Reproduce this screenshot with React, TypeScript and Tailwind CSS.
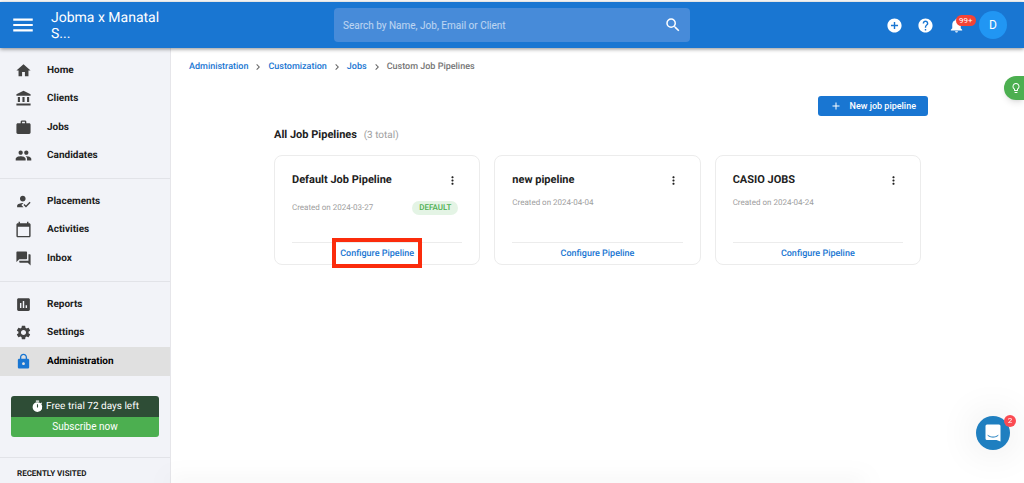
import {
  MdAccountBalance,
  MdAdd,
  MdAddCircle,
  MdAssessment,
  MdCalendarToday,
  MdChevronRight,
  MdForum,
  MdHelp,
  MdHome,
  MdHowToReg,
  MdLightbulbOutline,
  MdLock,
  MdMenu,
  MdMoreVert,
  MdNotifications,
  MdPeople,
  MdSearch,
  MdSettings,
  MdTimer,
  MdWork,
} from 'react-icons/md';
import type { IconType } from 'react-icons';

type NavEntry = { label: string; icon: IconType; active?: boolean };
type Pipeline = { name: string; created: string; isDefault?: boolean; highlighted?: boolean };

const mainNav: NavEntry[] = [
  { label: 'Home', icon: MdHome },
  { label: 'Clients', icon: MdAccountBalance },
  { label: 'Jobs', icon: MdWork },
  { label: 'Candidates', icon: MdPeople },
];

const activityNav: NavEntry[] = [
  { label: 'Placements', icon: MdHowToReg },
  { label: 'Activities', icon: MdCalendarToday },
  { label: 'Inbox', icon: MdForum },
];

const adminNav: NavEntry[] = [
  { label: 'Reports', icon: MdAssessment },
  { label: 'Settings', icon: MdSettings },
  { label: 'Administration', icon: MdLock, active: true },
];

const pipelines: Pipeline[] = [
  { name: 'Default Job Pipeline', created: '2024-03-27', isDefault: true, highlighted: true },
  { name: 'new pipeline', created: '2024-04-04' },
  { name: 'CASIO JOBS', created: '2024-04-24' },
];

const crumbs = ['Administration', 'Customization', 'Jobs'];

const NavGroup = ({ items, className }: { items: NavEntry[]; className: string }) => (
  <ul className={`grid auto-rows-fr ${className}`}>
    {items.map(({ label, icon: Icon, active }) => (
      <li key={label} className="flex">
        <a
          href="#"
          className={`flex grow items-center gap-[15px] pl-[15px] text-[10px] leading-[17px] font-bold ${active ? 'bg-[#e0e0e0] text-black' : 'text-[#212121]'}`}
        >
          <Icon size={17} className={active ? 'text-[#1976d2]' : 'text-[#424242]'} />
          {label}
        </a>
      </li>
    ))}
  </ul>
);

const Header = () => (
  <header className="relative z-10 mt-0.5 grid h-[46px] grid-cols-[1fr_minmax(0,356px)_1fr] items-center bg-[#1976d2] text-white shadow-[0_1px_4px_rgba(0,0,0,0.45)]">
    <div className="flex items-center">
      <button aria-label="Menu" className="ml-2.5">
        <MdMenu size={26} />
      </button>
      <div className="ml-[15px] w-[120px] pt-0.5 text-sm leading-4">Jobma x Manatal S...</div>
    </div>
    <form className="flex h-[34px] items-center rounded-sm bg-[#478bd9] pr-2">
      <input
        type="text"
        aria-label="Search"
        placeholder="Search by Name, Job, Email or Client"
        className="min-w-0 grow bg-transparent px-[9px] text-[10px] leading-[17px] outline-none placeholder:text-white/65"
      />
      <button type="button" aria-label="Search">
        <MdSearch size={18} />
      </button>
    </form>
    <div className="mr-[17px] flex items-center justify-end gap-3.5">
      <button aria-label="Add">
        <MdAddCircle size={17} />
      </button>
      <button aria-label="Help">
        <MdHelp size={17} />
      </button>
      <button aria-label="Notifications" className="relative">
        <MdNotifications size={17} />
        <span className="absolute -top-0.5 left-2 rounded-full bg-[#f44336] px-[3px] text-[8px] leading-[11px]">99+</span>
      </button>
      <button className="size-7 rounded-full bg-[#2196f3] text-xs">D</button>
    </div>
  </header>
);

const Sidebar = () => (
  <aside className="flex w-[171px] shrink-0 flex-col border-r border-[#e6e6ea] bg-[#f2f3f8] pt-2">
    <nav>
      <NavGroup items={mainNav} className="h-[114px]" />
      <hr className="my-2 border-[#e2e3e8]" />
      <NavGroup items={activityNav} className="h-[86px]" />
      <hr className="my-2 border-[#e2e3e8]" />
      <NavGroup items={adminNav} className="h-[86px]" />
    </nav>
    <div className="mx-[11px] mt-5 overflow-hidden rounded-[3px] text-center text-[10px] leading-5 text-white">
      <div className="flex h-[21px] items-center justify-center gap-0.5 bg-[#2e4d36]">
        <MdTimer size={13} />
        Free trial 72 days left
      </div>
      <button className="block w-full bg-[#4caf50]">Subscribe now</button>
    </div>
    <h2 className="mt-5 border-t border-[#e2e3e8] px-[17px] py-2.5 text-[8px] leading-3 font-bold text-[#212121]">
      RECENTLY VISITED
    </h2>
  </aside>
);

const PipelineCard = ({ name, created, isDefault, highlighted }: Pipeline) => (
  <article className="flex h-[110px] flex-col rounded-lg border border-[#ececec] px-[17px]">
    <div className="mt-4 flex items-center justify-between">
      <h3 className="text-[11px] leading-4 font-bold text-[#212121]">{name}</h3>
      <button aria-label={`${name} options`} className="mr-[3px]">
        <MdMoreVert size={13} className="text-[#212121]" />
      </button>
    </div>
    <div className={`flex items-center justify-between text-[8px] leading-[14px] text-[#9e9e9e] ${isDefault ? 'mt-[13px]' : 'mt-2'}`}>
      <span>Created on {created}</span>
      {isDefault && (
        <span className="mr-1 rounded-full bg-[#e4f4e5] px-[7px] font-medium text-[#4caf50]">DEFAULT</span>
      )}
    </div>
    <div className="relative mt-auto flex h-[22px] items-center justify-center border-t border-[#ececec]">
      <a href="#" className="text-[9px] leading-4 font-medium text-[#1976d2]">
        Configure Pipeline
      </a>
      {highlighted && (
        <span className="pointer-events-none absolute -top-[5px] left-1/2 h-[30px] w-[90px] -translate-x-1/2 border-4 border-[#fb2c0c]" />
      )}
    </div>
  </article>
);

export default function App() {
  return (
    <div className="flex min-h-screen flex-col overflow-x-hidden bg-white font-[Roboto,sans-serif] [text-rendering:geometricPrecision]">
      <Header />
      <div className="flex grow">
        <Sidebar />
        <main className="min-w-0 grow">
          <nav aria-label="Breadcrumb" className="flex items-center px-[18px] pt-3 text-[9px] leading-[14px] font-medium">
            {crumbs.map((crumb) => (
              <span key={crumb} className="flex items-center">
                <a href="#" className="text-[#1976d2]">
                  {crumb}
                </a>
                <MdChevronRight size={12} className="mx-1 text-[#666666]" />
              </span>
            ))}
            <span className="text-[#757575]">Custom Job Pipelines</span>
          </nav>
          <section className="mx-auto max-w-[661px] pt-[22px]">
            <div className="flex justify-end">
              <button className="flex h-5 items-center gap-2 rounded-[3px] bg-[#1976d2] px-3 text-[9px] leading-4 font-medium text-white">
                <MdAdd size={12} />
                New job pipeline
              </button>
            </div>
            <h1 className="mt-[11px] px-[7px] text-[11px] leading-4 font-bold text-[#212121]">
              All Job Pipelines <span className="ml-1 text-[10px] font-normal text-[#9e9e9e]">(3 total)</span>
            </h1>
            <div className="mt-[11px] grid grid-cols-3">
              {pipelines.map((pipeline) => (
                <div key={pipeline.name} className="px-[7px]">
                  <PipelineCard {...pipeline} />
                </div>
              ))}
            </div>
          </section>
        </main>
      </div>

      {/* soft shade along the bottom edge */}
      <div className="pointer-events-none fixed right-[160px] -bottom-px left-[170px] h-px shadow-[0_0_20px_rgba(0,0,0,0.5)]" />

      <button
        aria-label="Tips"
        className="fixed top-[76px] right-0 flex h-6 w-5 items-center justify-center rounded-l-full bg-[#4caf50] pl-1 text-white shadow-md"
      >
        <MdLightbulbOutline size={12} />
      </button>
      <button
        aria-label="Open chat, 2 unread"
        className="fixed right-3.5 bottom-[33px] flex size-[34px] items-center justify-center rounded-full bg-[#1f7fc0] shadow-[0_0_40px_rgba(0,0,0,0.12)]"
      >
        <svg width="16" height="18" viewBox="0 0 16 18" fill="none">
          <path d="M2 0.5h12a1.5 1.5 0 0 1 1.5 1.5v15.5l-4-1.5H2A1.5 1.5 0 0 1 .5 14.500V2A1.500 1.500 0 0 1 2 .5Z" fill="white" />
          <path d="M3 11.500c3 2.200 7 2.200 10 0" stroke="#1f7fc0" strokeLinecap="round" />
        </svg>
        <span className="absolute -top-px -right-1.5 size-3 rounded-full bg-[#fb4b52] text-[8px] leading-3 text-white">2</span>
      </button>
    </div>
  );
}
